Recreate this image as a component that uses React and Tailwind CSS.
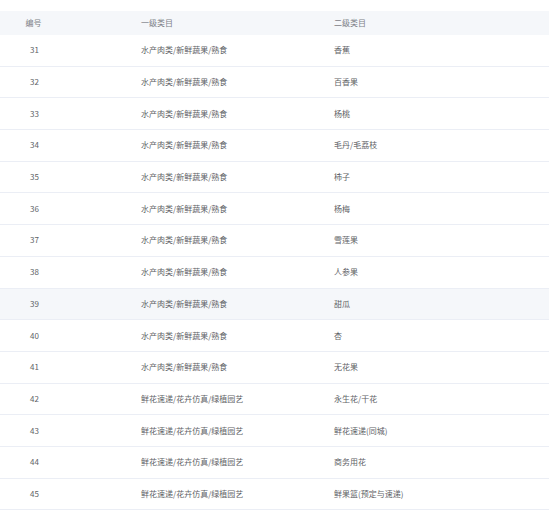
import React from "react";

const rows = [
  [31, "水产肉类/新鲜蔬果/熟食", "香蕉"],
  [32, "水产肉类/新鲜蔬果/熟食", "百香果"],
  [33, "水产肉类/新鲜蔬果/熟食", "杨桃"],
  [34, "水产肉类/新鲜蔬果/熟食", "毛丹/毛荔枝"],
  [35, "水产肉类/新鲜蔬果/熟食", "柿子"],
  [36, "水产肉类/新鲜蔬果/熟食", "杨梅"],
  [37, "水产肉类/新鲜蔬果/熟食", "雪莲果"],
  [38, "水产肉类/新鲜蔬果/熟食", "人参果"],
  [39, "水产肉类/新鲜蔬果/熟食", "甜瓜"],
  [40, "水产肉类/新鲜蔬果/熟食", "杏"],
  [41, "水产肉类/新鲜蔬果/熟食", "无花果"],
  [42, "鲜花速递/花卉仿真/绿植园艺", "永生花/干花"],
  [43, "鲜花速递/花卉仿真/绿植园艺", "鲜花速递(同城)"],
  [44, "鲜花速递/花卉仿真/绿植园艺", "商务用花"],
  [45, "鲜花速递/花卉仿真/绿植园艺", "鲜果篮(预定与速递)"],
];

export default function App() {
  return (
    <div
      className="w-[549px] h-[527px] bg-white pt-[11px] text-[8px] text-[#606266]"
      style={{ fontFamily: '"Noto Sans CJK SC", "Noto Sans", sans-serif' }}
    >
      <div className="grid grid-cols-[141px_193px_1fr] h-[24px] items-center bg-[#f5f7fa] text-[#7d8087]">
        <span className="w-[67px] text-center">编号</span>
        <span>一级类目</span>
        <span>二级类目</span>
      </div>
      {rows.map(([id, a, b]) => (
        <div
          key={id}
          className={
            "grid grid-cols-[141px_193px_1fr] h-[31.7px] items-center border-b border-[#ebeef5] " +
            (id === 39 ? "bg-[#f5f7fa]" : "")
          }
        >
          <span className="w-[69px] text-center">{id}</span>
          <span>{a}</span>
          <span>{b}</span>
        </div>
      ))}
    </div>
  );
}
